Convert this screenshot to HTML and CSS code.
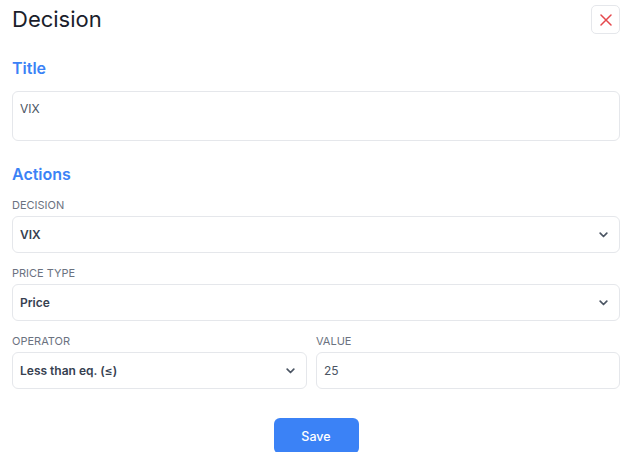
FILE: index.html
```html
<!DOCTYPE html>
<html lang="en">
<head>
  <meta charset="UTF-8" />
  <meta name="viewport" content="width=device-width,initial-scale=1.0" />
  <title>Decision</title>
  <link rel="stylesheet" href="styles.css">
</head>
<body>
  <div class="panel">
    <div class="panel-header">
      <h1>Decision</h1>
      <button class="close-btn" type="button" aria-label="Close">
        <svg width="12" height="12" viewBox="0 0 12 12">
          <path d="M1 1L11 11M11 1L1 11" stroke="#e5484d" stroke-width="1.5" stroke-linecap="round" fill="none"/>
        </svg>
      </button>
    </div>

    <h2 class="section-title first">Title</h2>
    <div class="textarea">VIX</div>

    <h2 class="section-title">Actions</h2>

    <div class="field">
      <label>DECISION</label>
      <div class="select">
        <span>VIX</span>
        <svg class="chevron" width="9" height="6" viewBox="0 0 9 6"><path d="M1.2 1.2L4.5 4.5L7.8 1.2" stroke="#4b5563" stroke-width="1.7" fill="none" stroke-linecap="round" stroke-linejoin="round"/></svg>
      </div>
    </div>

    <div class="field">
      <label>PRICE TYPE</label>
      <div class="select">
        <span>Price</span>
        <svg class="chevron" width="9" height="6" viewBox="0 0 9 6"><path d="M1.2 1.2L4.5 4.5L7.8 1.2" stroke="#4b5563" stroke-width="1.7" fill="none" stroke-linecap="round" stroke-linejoin="round"/></svg>
      </div>
    </div>

    <div class="field-row">
      <div class="field">
        <label>OPERATOR</label>
        <div class="select">
          <span>Less than eq. (≤)</span>
          <svg class="chevron" width="9" height="6" viewBox="0 0 9 6"><path d="M1.2 1.2L4.5 4.5L7.8 1.2" stroke="#4b5563" stroke-width="1.7" fill="none" stroke-linecap="round" stroke-linejoin="round"/></svg>
        </div>
      </div>
      <div class="field">
        <label>VALUE</label>
        <div class="input">25</div>
      </div>
    </div>

    <div class="actions">
      <button class="save-btn" type="button">Save</button>
    </div>
  </div>
</body>
</html>
```

FILE: styles.css
```css
body {
  margin: 0;
  font-family: Inter, "Noto Sans", Arial, sans-serif;
  background: #fff;
  color: #1f2937;
}

.panel {
  padding: 5px 4px 0 12px;
}

.panel-header {
  display: flex;
  justify-content: space-between;
  align-items: center;
  height: 29px;
}

.panel-header h1 {
  margin: 0;
  font-size: 22px;
  font-weight: 400;
  line-height: 29px;
  color: #1a1d2b;
}

.close-btn {
  width: 29px;
  height: 29px;
  border: 1px solid #e5e7eb;
  border-radius: 5px;
  background: #fff;
  display: flex;
  align-items: center;
  justify-content: center;
  padding: 0;
  cursor: pointer;
}

.section-title {
  margin: 23px 0 0;
  font-size: 16px;
  font-weight: 600;
  line-height: 20px;
  color: #3b82f6;
}

.section-title.first {
  margin-top: 24px;
}

.textarea {
  margin-top: 13px;
  height: 50px;
  box-sizing: border-box;
  border: 1px solid #e5e7eb;
  border-radius: 6px;
  padding: 9px 7px;
  font-size: 12px;
  line-height: 16px;
  color: #4b5563;
}

.field {
  display: flex;
  flex-direction: column;
  gap: 4px;
  margin-top: 13px;
}

.section-title + .field {
  margin-top: 14px;
}

.field label {
  font-size: 11px;
  line-height: 14px;
  color: #6b7280;
}

.select,
.input {
  height: 37px;
  box-sizing: border-box;
  border: 1px solid #e5e7eb;
  border-radius: 6px;
  padding: 0 11px 0 7px;
  display: flex;
  align-items: center;
  justify-content: space-between;
  font-size: 12px;
  color: #374151;
}

.select span {
  font-weight: 600;
}

.input {
  color: #4b5563;
}

.chevron {
  flex-shrink: 0;
}

.field-row {
  display: grid;
  grid-template-columns: 295px 1fr;
  gap: 9px;
  margin-top: 13px;
}

.field-row .field {
  margin-top: 0;
}

.actions {
  display: flex;
  justify-content: center;
  margin-top: 29px;
}

.save-btn {
  width: 85px;
  height: 36px;
  border: none;
  border-radius: 6px;
  background: #3b82f6;
  color: #fff;
  font-family: inherit;
  font-size: 12.5px;
  font-weight: 500;
  cursor: pointer;
}
```
